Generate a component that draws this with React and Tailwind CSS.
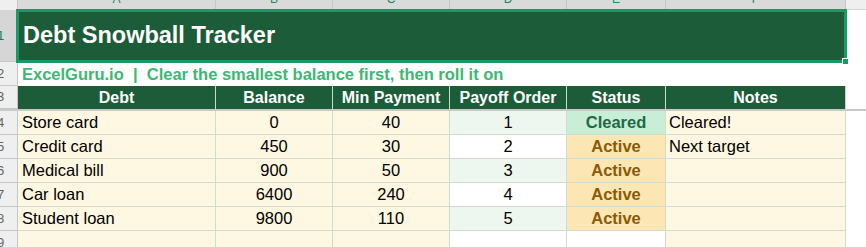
import React from "react";

const COLS = [
  { letter: "A", w: "w-[198px]", label: "Debt" },
  { letter: "B", w: "w-[117px]", label: "Balance" },
  { letter: "C", w: "w-[117px]", label: "Min Payment" },
  { letter: "D", w: "w-[117px]", label: "Payoff Order" },
  { letter: "E", w: "w-[99px]", label: "Status" },
  { letter: "F", w: "w-[180px]", label: "Notes" },
];

const ROWS = [
  ["Store card", "0", "40", "1", "Cleared", "Cleared!"],
  ["Credit card", "450", "30", "2", "Active", "Next target"],
  ["Medical bill", "900", "50", "3", "Active", ""],
  ["Car loan", "6400", "240", "4", "Active", ""],
  ["Student loan", "9800", "110", "5", "Active", ""],
];

function RowHead({ n, selected }) {
  return (
    <div
      className={
        "flex w-[18px] shrink-0 items-center overflow-hidden border-r border-b border-[#c6c6c6] text-[13px] " +
        (selected ? "bg-[#d6d6d6] text-[#1a7a55]" : "bg-[#efefef] text-[#5f6368]")
      }
    >
      <span className="-ml-[3px]">{n}</span>
    </div>
  );
}

function StatusCell({ value }) {
  const cleared = value === "Cleared";
  return (
    <div
      className={
        "flex w-[99px] shrink-0 items-center justify-center border-r border-b border-[#cfdccf] font-bold " +
        (cleared ? "bg-[#c9eed8] text-[#1d6a44]" : "bg-[#fce6b4] text-[#8c5a06]")
      }
    >
      {value}
    </div>
  );
}

const cell = "flex shrink-0 items-center border-r border-b border-[#cfdccf]";

export default function App() {
  return (
    <div className="h-[247px] w-[866px] overflow-hidden bg-white font-['Liberation_Sans',Arial,sans-serif] text-[16.5px] text-black">
      {/* column letters */}
      <div className="flex h-[10px]">
        <div className="w-[18px] shrink-0 border-r border-[#c6c6c6] bg-[#efefef]" />
        {COLS.map((c) => (
          <div
            key={c.letter}
            className={`${c.w} flex shrink-0 justify-center overflow-hidden border-r border-[#c6c6c6] bg-[#dadada] text-[12px] leading-none text-[#1a8a66]`}
          >
            <span className="-mt-[7px]">{c.letter}</span>
          </div>
        ))}
        <div className="flex-1 border-b border-[#d6d6d6] bg-[#efefef]" />
      </div>

      {/* title row */}
      <div className="flex h-[52px]">
        <RowHead n="1" selected />
        <div className="relative flex w-[828px] shrink-0 items-center bg-[#1c5c38] pl-[5px] text-[23.5px] font-bold text-white">
          Debt Snowball Tracker
          <div className="pointer-events-none absolute -top-[1px] -right-[1px] -bottom-[1px] -left-[2px] border-[3px] border-[#179a64]" />
          <div className="absolute -right-[3px] -bottom-[3px] h-[7px] w-[7px] border border-white bg-[#179a64]" />
        </div>
      </div>

      {/* subtitle row */}
      <div className="flex h-[24px]">
        <RowHead n="2" />
        <div className="flex flex-1 items-center whitespace-pre pl-[4px] font-bold text-[#3cb873]">
          {"ExcelGuru.io  |  Clear the smallest balance first, then roll it on"}
        </div>
      </div>

      {/* table header */}
      <div className="flex h-[23px]">
        <RowHead n="3" />
        {COLS.map((c) => (
          <div
            key={c.label}
            className={`${c.w} flex shrink-0 items-center justify-center border-r border-[#c9dcc9] bg-[#1c5c38] text-[16px] font-bold text-white last:border-r-0`}
          >
            {c.label}
          </div>
        ))}
        <div className="flex-1" />
      </div>

      {/* frozen line */}
      <div className="h-[2px] bg-[#c9c9c9]" />

      {ROWS.map((r, i) => (
        <div key={r[0]} className="flex h-[24px]">
          <RowHead n={String(i + 4)} />
          <div className={`${cell} w-[198px] bg-[#fef7e1] pl-[4px]`}>{r[0]}</div>
          <div className={`${cell} w-[117px] justify-center bg-[#fef7e1]`}>{r[1]}</div>
          <div className={`${cell} w-[117px] justify-center bg-[#fef7e1]`}>{r[2]}</div>
          <div className={`${cell} w-[117px] justify-center ${i % 2 === 0 ? "bg-[#eef7ef]" : "bg-white"}`}>
            {r[3]}
          </div>
          <StatusCell value={r[4]} />
          <div className={`${cell} w-[180px] bg-[#fef7e1] pl-[3px]`}>{r[5]}</div>
          <div className="flex-1" />
        </div>
      ))}

      {/* empty row 9 */}
      <div className="flex h-[24px]">
        <RowHead n="9" />
        <div className={`${cell} w-[198px] bg-[#fef7e1]`} />
        <div className={`${cell} w-[117px] bg-[#fef7e1]`} />
        <div className={`${cell} w-[117px] bg-[#fef7e1]`} />
        <div className={`${cell} w-[117px] bg-white`} />
        <div className={`${cell} w-[99px] bg-white`} />
        <div className={`${cell} w-[180px] bg-[#fef7e1]`} />
        <div className="flex-1" />
      </div>
    </div>
  );
}
